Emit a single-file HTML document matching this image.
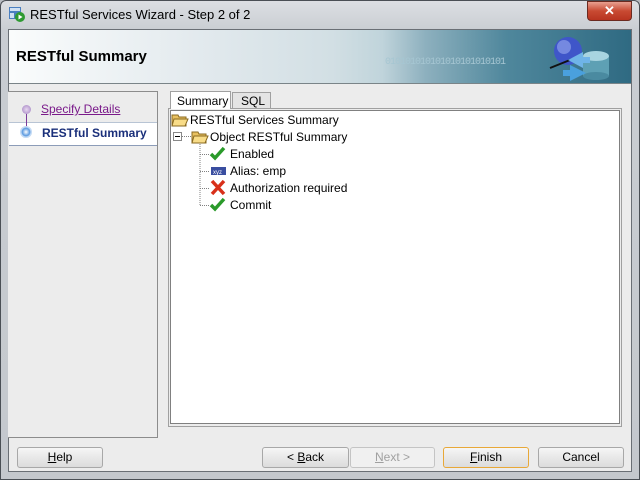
<!DOCTYPE html>
<html><head><style>
body{margin:0;width:640px;height:480px;overflow:hidden;font-family:"Liberation Sans",sans-serif;font-size:12px;background:#b8bcc2}
.abs{position:absolute}
.frame{left:0;top:0;width:638px;height:478px;border:1px solid #4a4f55;border-radius:6px 6px 0 0;background:linear-gradient(#dcdfe3,#c9cdd2 30px,#c4c8cd)}
.btn{position:absolute;top:447px;height:19px;border:1px solid #a8a8a8;border-radius:3px;background:linear-gradient(#f6f6f6,#e8e8e8 50%,#dcdcdc);text-align:center;line-height:19px;font-size:12px;color:#000}
.t{position:absolute;white-space:nowrap;font-size:12px}
</style></head><body>
<div class="abs frame"></div>
<svg class="abs" style="left:9px;top:6px" width="16" height="16"><rect x="0" y="1" width="12" height="12" fill="#4a7fc0"/><rect x="1" y="2" width="10" height="3" fill="#cfe0f3"/><rect x="1" y="7" width="4" height="5" fill="#cfe0f3"/><circle cx="11" cy="11" r="5" fill="#2e9a32"/><path d="M9.5 8.5 L13.5 11 L9.5 13.5Z" fill="#fff"/></svg>
<div class="t" style="left:30px;top:7px;font-size:13px;color:#000">RESTful Services Wizard - Step 2 of 2</div>
<div class="abs" style="left:587px;top:1px;width:43px;height:18px;border:1px solid #6b2a20;border-radius:0 0 4px 4px;background:linear-gradient(#e8a090,#c84a32 50%,#b83420);color:#fff;text-align:center;font-weight:bold;font-size:13px;line-height:18px">✕</div>
<div class="abs" style="left:8px;top:29px;width:624px;height:443px;background:#ececec;border:1px solid #6a6f75;box-sizing:border-box"></div>
<div class="abs" style="left:9px;top:30px;width:622px;height:53px;background:linear-gradient(90deg,#fafcfc 0,#e3eaee 30%,#d2dfe4 52%,#c0d4db 60%,#8db0be 67%,#4f879c 80%,#2f6a82 100%);border-bottom:1px solid #7a8488"></div>
<div class="t" style="left:16px;top:48px;font-size:15px;font-weight:bold">RESTful Summary</div>
<div class="t" style="left:385px;top:57px;font-size:10px;color:#a6c6d2;font-family:'Liberation Mono',monospace;letter-spacing:-1px">010101010101010101010101</div>
<svg class="abs" style="left:528px;top:30px" width="100" height="53"><circle cx="40" cy="21" r="14" fill="#3f56c9"/><circle cx="36" cy="17" r="7" fill="#8da0ea" opacity=".7"/><line x1="22" y1="38" x2="52" y2="26" stroke="#111" stroke-width="2"/><rect x="55" y="26" width="26" height="20" fill="#5ea0b4"/><ellipse cx="68" cy="46" rx="13" ry="4" fill="#4a8aa0"/><ellipse cx="68" cy="26" rx="13" ry="5" fill="#a8d4e0"/><path d="M40 30 L55 22 L55 27 L62 27 L62 33 L55 33 L55 38Z" fill="#6fb4e8"/><path d="M58 43 L42 51 L42 46 L35 46 L35 40 L42 40 L42 35Z" fill="#4aa0dd"/></svg>
<div class="abs" style="left:8px;top:91px;width:149px;height:345px;border:1px solid #8c8c8c;border-left:0;background:#ececec"></div>
<div class="abs" style="left:9px;top:122px;width:148px;height:22px;background:#fff;border-top:1px solid #b8c4d4;border-bottom:1px solid #8c9cb8"></div>
<div class="abs" style="left:26px;top:113px;width:1px;height:14px;background:#7a3a9a"></div>
<div class="abs" style="left:22px;top:105px;width:9px;height:9px;border-radius:50%;background:radial-gradient(#e8d8f0,#a080c0)"></div>
<div class="abs" style="left:20px;top:126px;width:12px;height:12px;border-radius:50%;background:radial-gradient(#fff 0,#5c9ae0 45%,#cfe2f7 60%,#7aa8e0);"></div>
<div class="t" style="left:41px;top:102px;color:#7a1a8a;text-decoration:underline">Specify Details</div>
<div class="t" style="left:42px;top:126px;font-weight:bold;color:#1a2f7a">RESTful Summary</div>
<div class="abs" style="left:168px;top:108px;width:454px;height:319px;border:1px solid #a0a0a0;box-sizing:border-box"></div>
<div class="abs" style="left:170px;top:110px;width:450px;height:314px;background:#fff;border:1px solid #808080;box-sizing:border-box"></div>
<div class="abs" style="left:170px;top:91px;width:61px;height:18px;background:#fff;border:1px solid #a0a0a0;border-bottom:0;box-sizing:border-box"></div>
<div class="t" style="left:177px;top:94px">Summary</div>
<div class="abs" style="left:232px;top:92px;width:39px;height:16px;background:#e4e4e4;border:1px solid #a0a0a0;border-bottom:0;box-sizing:border-box"></div>
<div class="t" style="left:241px;top:94px">SQL</div>
<svg class="abs" style="left:170px;top:112px" width="120" height="104">
<g stroke="#808080" stroke-dasharray="1,1" fill="none"><line x1="12" y1="24.5" x2="21" y2="24.5"/><line x1="30" y1="32" x2="30" y2="93"/><line x1="30" y1="42.5" x2="40" y2="42.5"/><line x1="30" y1="59.5" x2="40" y2="59.5"/><line x1="30" y1="76.5" x2="40" y2="76.5"/><line x1="30" y1="93.5" x2="40" y2="93.5"/></g>
<rect x="3.5" y="20.5" width="8" height="8" fill="#fff" stroke="#888"/><line x1="5" y1="24.5" x2="10" y2="24.5" stroke="#000"/>
<path d="M2 3h6l1 2h7v9H2z" fill="#e8c060" stroke="#8a6a20"/><path d="M4 7h14l-3 7H2z" fill="#f8dc88" stroke="#8a6a20"/>
<path d="M22 20h6l1 2h7v9H22z" fill="#e8c060" stroke="#8a6a20"/><path d="M24 24h14l-3 7H22z" fill="#f8dc88" stroke="#8a6a20"/>
<path d="M41 42l4 4 9-10" stroke="#2a9a2a" stroke-width="3.5" fill="none"/>
<rect x="41" y="55" width="15" height="8" fill="#3a4ea0"/><text x="43" y="62" font-size="6" fill="#fff" font-family="Liberation Sans">xyz</text>
<path d="M42 69l12 13M54 69l-12 13" stroke="#d8301a" stroke-width="3.5"/>
<path d="M41 93l4 4 9-10" stroke="#2a9a2a" stroke-width="3.5" fill="none"/>
</svg>
<div class="t" style="left:190px;top:113px">RESTful Services Summary</div>
<div class="t" style="left:210px;top:130px">Object RESTful Summary</div>
<div class="t" style="left:230px;top:147px">Enabled</div>
<div class="t" style="left:230px;top:164px">Alias: emp</div>
<div class="t" style="left:230px;top:181px">Authorization required</div>
<div class="t" style="left:230px;top:198px">Commit</div>
<div class="btn" style="left:17px;width:84px"><u>H</u>elp</div>
<div class="btn" style="left:262px;width:85px">&lt; <u>B</u>ack</div>
<div class="btn" style="left:350px;width:83px;color:#a0a0a0;border-color:#c4c4c4;background:#f0f0f0"><u>N</u>ext &gt;</div>
<div class="btn" style="left:443px;width:84px;border-color:#e8a838"><u>F</u>inish</div>
<div class="btn" style="left:538px;width:84px">Cancel</div>
</body></html>
